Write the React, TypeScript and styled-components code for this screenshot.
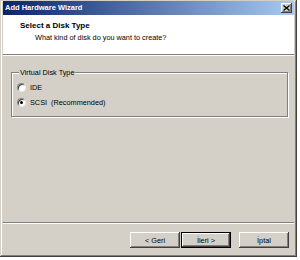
import React from "react"
import styled, { createGlobalStyle } from "styled-components"

const GlobalStyle = createGlobalStyle`
  html, body { margin: 0; padding: 0; background: #fff; }
  body { font-family: "Liberation Sans", Arial, sans-serif; color: #000; }
`

const raised = `
  box-shadow: inset -1px -1px #404040, inset 1px 1px #fff,
    inset -2px -2px #808080, inset 2px 2px #d4d0c8;
`

const Window = styled.div`
  width: 297px;
  height: 257px;
  box-sizing: border-box;
  padding: 1px 3px 3px 3px;
  background: #d4d0c8;
  box-shadow: inset -1px -1px #404040, inset 1px 1px #d4d0c8,
    inset -2px -2px #808080, inset 2px 2px #fff;
  display: flex;
  flex-direction: column;
`

const TitleBar = styled.div`
  height: 14px;
  flex: none;
  display: flex;
  align-items: center;
  justify-content: space-between;
  padding: 0 2px 0 2px;
  background: linear-gradient(to right, #0a246a, #a6caf0);
`

const Title = styled.span`
  color: #fff;
  font-weight: bold;
  font-size: 7.5px;
  line-height: 14px;
`

const CloseButton = styled.button`
  width: 11px;
  height: 10px;
  padding: 0;
  border: none;
  background: #d4d0c8;
  ${raised}
  display: flex;
  align-items: center;
  justify-content: center;
`

const Header = styled.div`
  height: 39px;
  flex: none;
  box-sizing: border-box;
  background: #fff;
  padding: 6px 0 0 17px;
`

const HeaderTitle = styled.div`
  font-weight: bold;
  font-size: 8px;
  line-height: 10px;
`

const HeaderText = styled.div`
  font-size: 7.3px;
  line-height: 10px;
  margin-top: 2px;
  padding-left: 15px;
`

const Separator = styled.div`
  flex: none;
  height: 0;
  border-top: 1px solid #808080;
  border-bottom: 1px solid #fff;
`

const Body = styled.div`
  flex: 1;
  padding: 12px 6px 0 8px;
`

const Group = styled.fieldset`
  margin: 0;
  padding: 3px 0 6px 5px;
  border: 1px solid #808080;
  box-shadow: inset 1px 1px #fff, 1px 1px #fff;
  font-size: 7.3px;
`

const Legend = styled.legend`
  padding: 0 1px;
  margin-left: 2px;
  background: #d4d0c8;
  line-height: 9px;
`

const RadioRow = styled.label`
  display: flex;
  align-items: center;
  gap: 4px;
  height: 15px;
  font-size: 7.3px;
`

const RadioDot = styled.span<{ $checked?: boolean }>`
  width: 9px;
  height: 9px;
  box-sizing: border-box;
  border-radius: 50%;
  background: #fff;
  border: 1px solid;
  border-color: #808080 #e8e8e8 #e8e8e8 #808080;
  box-shadow: inset 1px 1px #404040;
  display: flex;
  align-items: center;
  justify-content: center;
  &::after {
    content: "";
    width: 3px;
    height: 3px;
    border-radius: 50%;
    background: ${({ $checked }) => ($checked ? "#000" : "transparent")};
  }
`

const ButtonRow = styled.div`
  flex: none;
  display: flex;
  justify-content: flex-end;
  padding: 8px 5px 6px 0;
`

const Button = styled.button<{ $default?: boolean; $gap?: number }>`
  width: 50px;
  height: 16px;
  margin-left: ${({ $gap }) => $gap ?? 0}px;
  padding: 0;
  border: none;
  background: #d4d0c8;
  font-family: "Liberation Sans", Arial, sans-serif;
  font-size: 7.3px;
  color: #000;
  ${({ $default }) =>
    $default
      ? `box-shadow: inset 0 0 0 1px #000, inset -2px -2px #404040, inset 2px 2px #fff, inset -3px -3px #808080;`
      : raised}
`

export default function App() {
  return (
    <>
      <GlobalStyle />
      <Window>
        <TitleBar>
          <Title>Add Hardware Wizard</Title>
          <CloseButton aria-label="Close">
            <svg width="7" height="6" viewBox="0 0 7 6">
              <path d="M0.5 0.5 L6.5 5.5 M6.5 0.5 L0.5 5.5" stroke="#000" strokeWidth="1.3" />
            </svg>
          </CloseButton>
        </TitleBar>
        <Header>
          <HeaderTitle>Select a Disk Type</HeaderTitle>
          <HeaderText>What kind of disk do you want to create?</HeaderText>
        </Header>
        <Separator />
        <Body>
          <Group>
            <Legend>Virtual Disk Type</Legend>
            <RadioRow>
              <RadioDot />
              IDE
            </RadioRow>
            <RadioRow>
              <RadioDot $checked />
              SCSI&nbsp; (Recommended)
            </RadioRow>
          </Group>
        </Body>
        <Separator />
        <ButtonRow>
          <Button>&lt; Geri</Button>
          <Button $default $gap={1}>İleri &gt;</Button>
          <Button $gap={8}>İptal</Button>
        </ButtonRow>
      </Window>
    </>
  )
}
